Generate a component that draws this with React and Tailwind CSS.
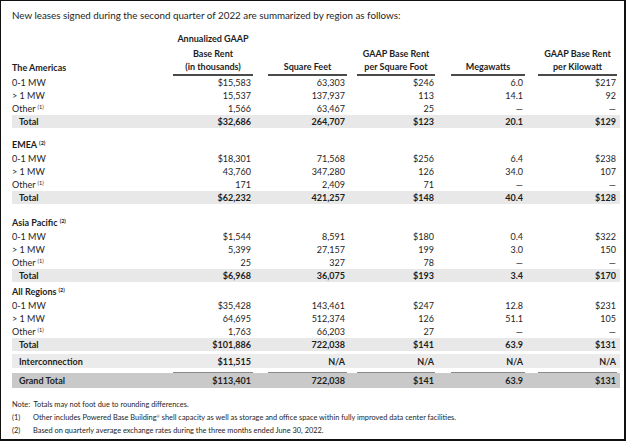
import React from "react";

const CELL = [
  "w-[80px] text-right pr-[2px]",
  "ml-[15px] w-[79px] text-right pr-[2px]",
  "ml-[10px] w-[78px] text-right pr-[1px]",
  "ml-[16px] w-[74px] text-right pr-[2px]",
  "ml-[13px] w-[79px] text-right pr-[1px]",
];
const HEAD = [
  "w-[80px] text-center",
  "ml-[15px] w-[79px] text-center",
  "ml-[10px] w-[78px] text-center",
  "ml-[16px] w-[74px] text-center",
  "ml-[13px] w-[79px] text-center",
];

function Sup({ n }) {
  return (
    <span className="relative -top-[3px] ml-[2px] text-[5.5px] leading-none">({n})</span>
  );
}

function Row({ label, vals, cls = "", labelCls = "" }) {
  return (
    <div className={`flex w-[608px] items-center ${cls}`}>
      <div className={`w-[161px] ${labelCls}`}>{label}</div>
      {vals.map((v, i) => (
        <div key={i} className={CELL[i]}>
          {v}
        </div>
      ))}
    </div>
  );
}

function Section({ rows, total, heading, headingCls }) {
  return (
    <div>
      {heading && (
        <div className={`flex items-center font-bold ${headingCls}`}>{heading}</div>
      )}
      <Row label="0-1 MW" vals={rows[0]} cls="h-[13px]" />
      <Row label="> 1 MW" vals={rows[1]} cls="h-[13px]" />
      <Row label={<span>Other<Sup n={1} /></span>} vals={rows[2]} cls="h-[13px]" />
      <Row
        label="Total"
        vals={total}
        cls="h-[13px] bg-[#e8e8e8] font-bold"
        labelCls="pl-[7px]"
      />
    </div>
  );
}

export default function App() {
  return (
    <div
      className="w-[626px] h-[441px] border-l border-t border-r-2 border-b-2 border-[#111] bg-white text-[#1e1e1e] overflow-hidden"
      style={{ fontFamily: "Lato, 'Liberation Sans', sans-serif" }}
    >
      <div className="pl-[11px] pt-[8px] text-[9px] leading-none">
        <div className="h-[14px] flex items-center text-[9.8px]">
          New leases signed during the second quarter of 2022 are summarized by region as follows:
        </div>
        {/* header */}
        <div className="mt-[8px] font-bold">
          <div className="flex h-[15px] items-center">
            <div className="w-[161px]" />
            <div className={HEAD[0]}>Annualized GAAP</div>
          </div>
          <div className="flex h-[15px] items-center">
            <div className="w-[161px]" />
            <div className={HEAD[0]}>Base Rent</div>
            <div className={HEAD[1]} />
            <div className={HEAD[2]}>GAAP Base Rent</div>
            <div className={HEAD[3]} />
            <div className={HEAD[4]}>GAAP Base Rent</div>
          </div>
          <div className="flex h-[15px] items-start">
            <div className="w-[161px] h-[12px] flex items-center">The Americas</div>
            {["(in thousands)", "Square Feet", "per Square Foot", "Megawatts", "per Kilowatt"].map(
              (t, i) => (
                <div key={i} className={`${HEAD[i]} h-[15px] border-b-2 border-[#4a4a4a] pt-[1px]`}>
                  {t}
                </div>
              )
            )}
          </div>
        </div>

        <Section
          rows={[
            ["$15,583", "63,303", "$246", "6.0", "$217"],
            ["15,537", "137,937", "113", "14.1", "92"],
            ["1,566", "63,467", "25", "—", "—"],
          ]}
          total={["$32,686", "264,707", "$123", "20.1", "$129"]}
        />

        <Section
          heading={<span>EMEA<Sup n={2} /></span>}
          headingCls="mt-[10px] h-[14px]"
          rows={[
            ["$18,301", "71,568", "$256", "6.4", "$238"],
            ["43,760", "347,280", "126", "34.0", "107"],
            ["171", "2,409", "71", "—", "—"],
          ]}
          total={["$62,232", "421,257", "$148", "40.4", "$128"]}
        />

        <Section
          heading={<span>Asia Pacific<Sup n={2} /></span>}
          headingCls="mt-[11px] h-[15px]"
          rows={[
            ["$1,544", "8,591", "$180", "0.4", "$322"],
            ["5,399", "27,157", "199", "3.0", "150"],
            ["25", "327", "78", "—", "—"],
          ]}
          total={["$6,968", "36,075", "$193", "3.4", "$170"]}
        />

        <Section
          heading={<span>All Regions<Sup n={2} /></span>}
          headingCls="mt-[3px] h-[14px]"
          rows={[
            ["$35,428", "143,461", "$247", "12.8", "$231"],
            ["64,695", "512,374", "126", "51.1", "105"],
            ["1,763", "66,203", "27", "—", "—"],
          ]}
          total={["$101,886", "722,038", "$141", "63.9", "$131"]}
        />

        <div className="mt-[3px]">
          <Row
            label="Interconnection"
            vals={["$11,515", "N/A", "N/A", "N/A", "N/A"]}
            cls="h-[14px] bg-[#ebebeb] font-bold"
            labelCls="pl-[7px]"
          />
        </div>
        <div className="mt-[4px] flex h-[1px] w-[608px]">
          <div className="w-[161px]" />
          {HEAD.map((c, i) => (
            <div key={i} className={`${c} bg-[#8a8a8a]`} />
          ))}
        </div>
        <Row
          label="Grand Total"
          vals={["$113,401", "722,038", "$141", "63.9", "$131"]}
          cls="h-[15px] bg-[#c9c9c9] font-bold"
          labelCls="pl-[7px]"
        />

        <div className="mt-[10px] text-[7.4px]">
          <div className="h-[13px] flex items-center">Note:&nbsp; Totals may not foot due to rounding differences.</div>
          <div className="h-[13px] flex items-center">
            <span className="w-[21px]">(1)</span>
            <span>
              Other includes Powered Base Building<sup className="text-[4px]">®</sup> shell capacity as well as storage and office space within fully improved data center facilities.
            </span>
          </div>
          <div className="h-[13px] flex items-center">
            <span className="w-[21px]">(2)</span>
            <span>Based on quarterly average exchange rates during the three months ended June 30, 2022.</span>
          </div>
        </div>
      </div>
    </div>
  );
}
